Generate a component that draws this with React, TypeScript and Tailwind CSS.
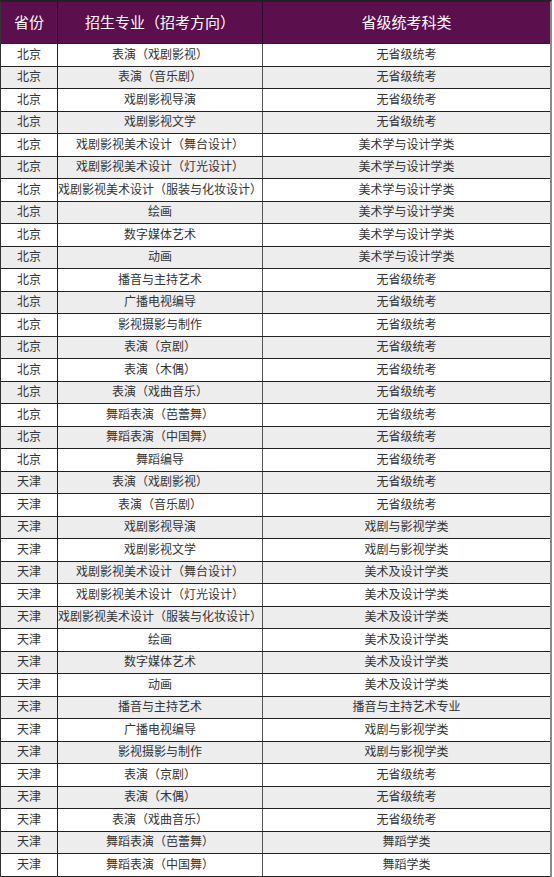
const bj: [string, string][] = [
  ["表演（戏剧影视）", "无省级统考"],
  ["表演（音乐剧）", "无省级统考"],
  ["戏剧影视导演", "无省级统考"],
  ["戏剧影视文学", "无省级统考"],
  ["戏剧影视美术设计（舞台设计）", "美术学与设计学类"],
  ["戏剧影视美术设计（灯光设计）", "美术学与设计学类"],
  ["戏剧影视美术设计（服装与化妆设计）", "美术学与设计学类"],
  ["绘画", "美术学与设计学类"],
  ["数字媒体艺术", "美术学与设计学类"],
  ["动画", "美术学与设计学类"],
  ["播音与主持艺术", "无省级统考"],
  ["广播电视编导", "无省级统考"],
  ["影视摄影与制作", "无省级统考"],
  ["表演（京剧）", "无省级统考"],
  ["表演（木偶）", "无省级统考"],
  ["表演（戏曲音乐）", "无省级统考"],
  ["舞蹈表演（芭蕾舞）", "无省级统考"],
  ["舞蹈表演（中国舞）", "无省级统考"],
  ["舞蹈编导", "无省级统考"],
];

const tj: [string, string][] = [
  ["表演（戏剧影视）", "无省级统考"],
  ["表演（音乐剧）", "无省级统考"],
  ["戏剧影视导演", "戏剧与影视学类"],
  ["戏剧影视文学", "戏剧与影视学类"],
  ["戏剧影视美术设计（舞台设计）", "美术及设计学类"],
  ["戏剧影视美术设计（灯光设计）", "美术及设计学类"],
  ["戏剧影视美术设计（服装与化妆设计）", "美术及设计学类"],
  ["绘画", "美术及设计学类"],
  ["数字媒体艺术", "美术及设计学类"],
  ["动画", "美术及设计学类"],
  ["播音与主持艺术", "播音与主持艺术专业"],
  ["广播电视编导", "戏剧与影视学类"],
  ["影视摄影与制作", "戏剧与影视学类"],
  ["表演（京剧）", "无省级统考"],
  ["表演（木偶）", "无省级统考"],
  ["表演（戏曲音乐）", "无省级统考"],
  ["舞蹈表演（芭蕾舞）", "舞蹈学类"],
  ["舞蹈表演（中国舞）", "舞蹈学类"],
];

const rows = [
  ...bj.map(([m, c]) => ["北京", m, c]),
  ...tj.map(([m, c]) => ["天津", m, c]),
];

export default function App() {
  return (
    <div className="w-[554px] h-[877px] bg-white overflow-hidden">
      <div
        className="w-[552px] border-t-2 border-t-[#222] border-l border-l-[#333] border-r-2 border-r-[#8a8a8a]"
        style={{ fontFamily: '"Liberation Serif", "Noto Sans CJK SC", serif' }}
      >
        <div
          className="grid grid-cols-[57px_205px_1fr] h-[42px] bg-[#5b0f4d] text-white text-[15px] border-b border-[#222]"
          style={{ fontFamily: '"Noto Sans CJK SC", sans-serif' }}
        >
          <div className="flex items-center justify-center border-r border-[#2a0a24]">省份</div>
          <div className="flex items-center justify-center border-r border-[#2a0a24]">招生专业（招考方向）</div>
          <div className="flex items-center justify-center">省级统考科类</div>
        </div>
        {rows.map((r, i) => (
          <div
            key={i}
            className={`grid grid-cols-[57px_205px_1fr] h-[22.5px] text-[12px] leading-none text-[#333] border-b border-[#222] ${
              i % 2 === 1 ? "bg-[#ededed]" : "bg-white"
            }`}
          >
            <div className="flex items-center justify-center border-r border-[#222]">{r[0]}</div>
            <div className="flex items-center justify-center border-r border-[#555] whitespace-nowrap">{r[1]}</div>
            <div className="flex items-center justify-center">{r[2]}</div>
          </div>
        ))}
      </div>
    </div>
  );
}
